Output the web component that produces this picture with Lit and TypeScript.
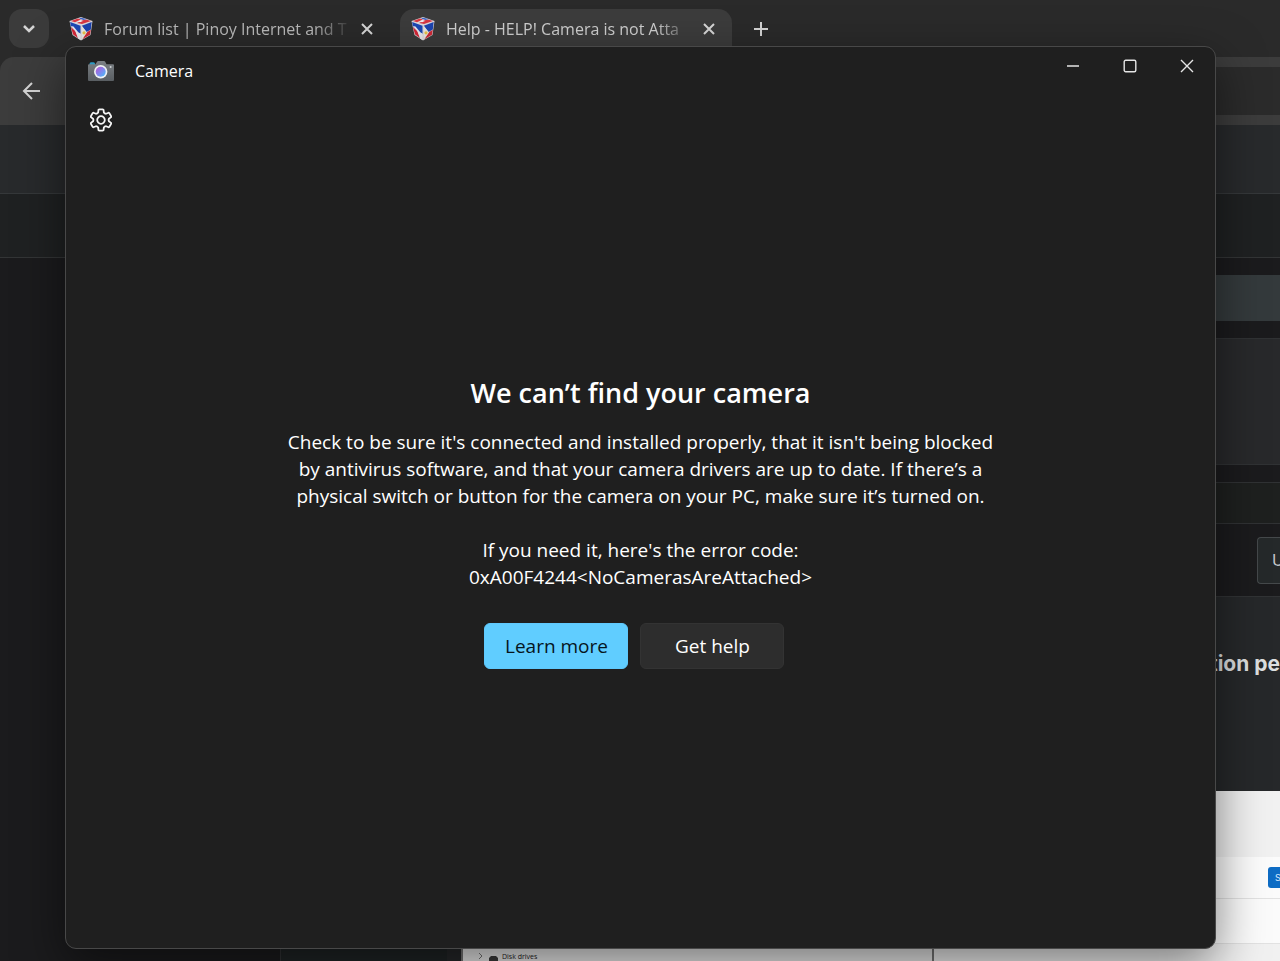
import { LitElement, html, css, svg } from "lit";
import { customElement, property } from "lit/decorators.js";

/** Outline of a six-toothed gear centred on the origin. */
function gearPath(): string {
  const polar = (radius: number, degrees: number) => {
    const a = (degrees * Math.PI) / 180;
    return `${(radius * Math.sin(a)).toFixed(2)} ${(-radius * Math.cos(a)).toFixed(2)}`;
  };
  let d = "";
  for (let tooth = 0; tooth < 6; tooth++) {
    const a = tooth * 60;
    d += `${tooth ? "L" : "M"}${polar(8, a - 21)}`;
    d += `L${polar(10.5, a - 14)}Q${polar(10.9, a - 11)} ${polar(10.8, a - 8)}`;
    d += `L${polar(10.8, a + 8)}Q${polar(10.9, a + 11)} ${polar(10.5, a + 14)}`;
    d += `L${polar(8, a + 21)}Q${polar(7.2, a + 30)} ${polar(8, a + 39)}`;
  }
  return d + "Z";
}

const cubeIcon = html`
  <svg class="cube" viewBox="0 0 24 24" aria-hidden="true">
    <path d="M12 0 23.500 4 21.500 18 12 23.500 3.500 18 0.500 4Z" fill="#ddd9dd" />
    <path d="M2 4 9 1.400 12 2.600 6 5.300Z" fill="#df3542" />
    <path d="M13 3.600 17 2.400 22 4 13 7 8 6Z" fill="#d93540" />
    <path d="M12 0.700 17.500 2 14.500 3 10 1.500Z" fill="#3b62c2" />
    <path d="M8.500 4.300 11.500 3.300 14 4 11 5.300Z" fill="#f5f0f2" />
    <path d="M1.200 5 11.500 8.700 11.500 17 6.500 14 1.800 9.500Z" fill="#1c48b6" />
    <path d="M1.800 10 6 13.500 9.500 21.500 4.200 17.600Z" fill="#d42738" />
    <path d="M1.700 9 4.500 9.500 9.500 15.500 11.500 16.500 11.500 23 9 21.500 6.500 14.500Z" fill="#eae8ec" />
    <path d="M12.800 8.700 22.700 5 21.800 12.500 17.500 15Z" fill="#1c44b0" />
    <path d="M17.500 15.500 21.800 12.800 21 17.700 13.500 22.300Z" fill="#cf2936" />
    <path d="M12.800 9 18 15.500 12.800 22.500Z" fill="#ece8e2" />
    <circle cx="15" cy="15.800" r="1.600" fill="#e8c24a" />
  </svg>
`;

const cameraIcon = html`
  <svg class="camera" viewBox="0 0 26 20" aria-hidden="true">
    <defs>
      <linearGradient id="body" x1="0" y1="0" x2="0" y2="1">
        <stop offset="0" stop-color="#7b8084" />
        <stop offset="1" stop-color="#595e62" />
      </linearGradient>
      <linearGradient id="lens" x1="0" y1="0" x2="1" y2="1">
        <stop offset="0.100" stop-color="#b05fd6" />
        <stop offset="0.550" stop-color="#7d8af0" />
        <stop offset="1" stop-color="#41c4f5" />
      </linearGradient>
    </defs>
    <rect x="1.500" y="1.300" width="5.500" height="4" rx="1.500" fill="#2c9bc4" />
    <path d="M1 3.200H7.500L9 .8Q9.400 0 10.200 0H16Q16.800 0 17.200.8L18.500 3.200H25Q26 3.200 26 4.200V19Q26 20 25 20H1Q0 20 0 19V4.200Q0 3.200 1 3.200Z" fill="url(#body)" />
    <circle cx="12.700" cy="10.800" r="6.700" fill="#eef1f4" />
    <circle cx="12.700" cy="10.800" r="5" fill="url(#lens)" />
    <circle cx="22.600" cy="6" r="1" fill="#cdd1d4" />
  </svg>
`;

const cross = svg`<path d="M1 1 11 11M11 1 1 11" />`;

@customElement("browser-tab")
export class BrowserTab extends LitElement {
  @property() label = "";
  @property({ type: Boolean, reflect: true }) active = false;

  static styles = css`
    :host {
      display: flex;
      align-items: center;
      gap: 11px;
      box-sizing: border-box;
      width: 332px;
      height: 40px;
      padding: 0 15px 0 11px;
      border-radius: 14px 14px 0 0;
      color: #b9b9b9;
    }
    :host([active]) {
      background: #3c3c3c;
      color: #cfcfcf;
    }
    .cube {
      flex: none;
      width: 24px;
      height: 24px;
    }
    .label {
      flex: 1;
      overflow: hidden;
      white-space: nowrap;
      font-size: 16px;
      line-height: 24px;
      mask-image: linear-gradient(to right, #000 86%, transparent 102%);
    }
    .close {
      display: flex;
      flex: none;
      padding: 2px;
      border: 0;
      background: none;
      color: inherit;
    }
    .close svg {
      width: 12px;
      height: 12px;
      fill: none;
      stroke: #d6d6d6;
      stroke-width: 2;
    }
  `;

  render() {
    return html`
      ${cubeIcon}
      <span class="label">${this.label}</span>
      <button class="close" aria-label="Close tab">
        <svg viewBox="0 0 12 12">${cross}</svg>
      </button>
    `;
  }
}

@customElement("browser-window")
export class BrowserWindow extends LitElement {
  static styles = css`
    :host {
      display: flex;
      flex-direction: column;
      height: 100%;
      background: #1b1b1d;
    }
    button {
      font: inherit;
      border: 0;
      margin: 0;
    }
    .tabs {
      display: flex;
      flex: none;
      align-items: center;
      height: 57px;
      padding-left: 9px;
      background: #2a2a2a;
    }
    .search {
      display: grid;
      place-items: center;
      width: 40px;
      height: 39px;
      border-radius: 13px;
      background: #3b3b3b;
      margin-right: 9px;
    }
    .tabs svg,
    .toolbar svg {
      fill: none;
      stroke: #d4d4d4;
      stroke-width: 2;
    }
    .tabs browser-tab + browser-tab {
      margin-left: 10px;
    }
    .new {
      display: flex;
      padding: 0;
      margin-left: 21px;
      background: none;
    }
    .toolbar {
      display: flex;
      align-items: center;
      gap: 60px;
      height: 68px;
      box-sizing: border-box;
      padding-left: 22px;
      background: #3c3c3c;
      border-top-left-radius: 14px;
    }
    .strip {
      flex: none;
      background: #2a2a2a;
    }
    .back {
      display: flex;
      padding: 0;
      background: none;
    }
    .address {
      flex: 1;
      height: 48px;
      min-width: 0;
      box-sizing: border-box;
      border: 0;
      border-radius: 24px 0 0 24px;
      background: #2b2b2b;
    }
    .header {
      flex: none;
      height: 68px;
      background: #282a2c;
      border-bottom: 1px solid #35383a;
    }
    .nav {
      flex: none;
      height: 63px;
      background: #1f2122;
      border-bottom: 1px solid #333536;
    }
    .content {
      display: flex;
      flex: 1;
      flex-direction: column;
      min-height: 0;
      margin-left: 280px;
      padding-top: 17px;
      font-family: Inter, sans-serif;
    }
    .notice {
      flex: none;
      height: 46px;
      margin-bottom: 17px;
      background: #343a3c;
    }
    .banner,
    .crumbs {
      flex: none;
      box-sizing: border-box;
      border: 1px solid #303234;
      border-right: 0;
    }
    .banner {
      height: 127px;
      margin-bottom: 17px;
      background: #28292b;
    }
    .crumbs {
      height: 42px;
      background: #1e201f;
    }
    .actions {
      display: flex;
      flex: none;
      align-items: center;
      justify-content: flex-end;
      height: 72px;
    }
    .action {
      box-sizing: border-box;
      width: 23px;
      height: 47px;
      padding: 0 0 0 14px;
      overflow: hidden;
      text-align: left;
      font-size: 16px;
      color: #c4c8ca;
      background: #25292a;
      border: 1px solid #45494b;
      border-right: 0;
      border-radius: 4px 0 0 4px;
    }
    .post {
      display: grid;
      flex: 1;
      grid-template-columns: 166px 1fr;
      min-height: 0;
      background: #26282a;
      border: 1px solid #313335;
      border-width: 1px 0 0 1px;
    }
    .author {
      background: #1f2425;
    }
    .message {
      display: grid;
      grid-template-rows: 194px 1fr;
      padding-left: 14px;
      min-height: 0;
    }
    .title {
      margin: 0;
      padding-top: 52px;
      text-align: right;
      font-size: 21px;
      line-height: 30px;
      font-weight: 700;
      color: #dcdedf;
      white-space: nowrap;
      overflow: hidden;
    }
    .shot {
      display: grid;
      grid-template-columns: 473px 1fr;
      background: #f1f1f1;
      min-height: 0;
    }
    .devices {
      display: flex;
      align-items: flex-end;
      gap: 4px;
      box-sizing: border-box;
      padding: 0 20px 0 15px;
      border: 2px solid #777;
      border-width: 0 2px;
      background: #ececec;
      color: #222;
      font-family: "Open Sans", sans-serif;
      font-size: 7px;
      line-height: 9px;
      white-space: nowrap;
    }
    .devices svg {
      width: 20px;
      height: 8px;
    }
    .settings {
      display: grid;
      grid-template-rows: 66px 42px 45px 1fr;
    }
    .row {
      display: flex;
      align-items: center;
      justify-content: flex-end;
      background: #fbfbfb;
      border-bottom: 1px solid #e2e2e2;
    }
    .save {
      box-sizing: border-box;
      width: 12px;
      height: 21px;
      padding: 0 0 0 7px;
      overflow: hidden;
      border-radius: 3px 0 0 3px;
      background: #0e6cc4;
      color: #d8ebff;
      font-size: 9px;
      text-align: left;
    }
  `;

  render() {
    return html`
      <div class="tabs">
        <button class="search" aria-label="Search tabs">
          <svg width="14" height="10" viewBox="0 0 14 10"><path d="M2 2 7 7 12 2" stroke-width="2.500" /></svg>
        </button>
        <browser-tab label="Forum list | Pinoy Internet and T"></browser-tab>
        <browser-tab label="Help - HELP! Camera is not Atta" active></browser-tab>
        <button class="new" aria-label="New tab">
          <svg width="16" height="16" viewBox="0 0 16 16"><path d="M8 1V15M1 8H15" /></svg>
        </button>
      </div>
      <div class="strip">
        <div class="toolbar">
          <button class="back" aria-label="Back">
            <svg width="20" height="18" viewBox="0 0 20 18"><path d="M18 9H2M10 1 2 9 10 17" /></svg>
          </button>
          <input class="address" type="text" aria-label="Address" />
        </div>
      </div>
      <div class="header"></div>
      <div class="nav"></div>
      <div class="content">
        <div class="notice"></div>
        <div class="banner"></div>
        <div class="crumbs"></div>
        <div class="actions"><button class="action">U</button></div>
        <div class="post">
          <div class="author"></div>
          <div class="message">
            <h2 class="title">tion pe</h2>
            <div class="shot">
              <div class="devices">
                <svg viewBox="0 0 20 8" aria-hidden="true">
                  <path d="M1 0 4 3 1 6" fill="none" stroke="#777" />
                  <path d="M13 3H18L20 5V8H11V5Z" fill="#3c3c3c" />
                </svg>
                <span>Disk drives</span>
              </div>
              <div class="settings">
                <div></div>
                <div class="row"><button class="save">S</button></div>
                <div class="row"></div>
                <div></div>
              </div>
            </div>
          </div>
        </div>
      </div>
    `;
  }
}

@customElement("camera-window")
export class CameraWindow extends LitElement {
  static styles = css`
    :host {
      display: grid;
      grid-template-rows: 47px 1fr;
      box-sizing: border-box;
      border: 1px solid #484848;
      border-radius: 11px;
      background: #1f1f1f;
      color: #fff;
      overflow: hidden;
      box-shadow: 0 16px 48px rgba(0, 0, 0, 0.5);
    }
    button {
      font: inherit;
      margin: 0;
    }
    .titlebar {
      display: flex;
      align-items: center;
      padding-left: 22px;
    }
    .camera {
      width: 26px;
      height: 20px;
    }
    .name {
      flex: 1;
      margin-left: 21px;
      font-size: 16px;
      line-height: 24px;
    }
    .control {
      display: grid;
      place-items: center;
      align-self: flex-start;
      width: 57px;
      height: 38px;
      padding: 0;
      border: 0;
      background: none;
    }
    .control svg {
      width: 14px;
      height: 14px;
      fill: none;
      stroke: #e6e6e6;
      stroke-width: 1.4;
    }
    .body {
      display: grid;
    }
    .settings,
    .message {
      grid-area: 1 / 1;
    }
    .settings {
      display: flex;
      place-self: start;
      margin: 13px 0 0 23px;
      padding: 0;
      border: 0;
      background: none;
    }
    .settings svg {
      width: 24px;
      height: 26px;
      fill: none;
      stroke: #f4f4f4;
      stroke-width: 1.8;
      stroke-linejoin: round;
    }
    .message {
      place-self: center;
      padding-top: 2px;
      text-align: center;
    }
    .heading {
      margin: 0 0 18px;
      font-size: 27px;
      line-height: 36px;
      font-weight: 600;
    }
    .text {
      margin: 0 0 27px;
      font-size: 19px;
      line-height: 27px;
      white-space: nowrap;
    }
    .text:last-of-type {
      margin-bottom: 32px;
    }
    .buttons {
      display: flex;
      justify-content: center;
      gap: 12px;
      padding-right: 12px;
    }
    .button {
      width: 144px;
      height: 46px;
      padding: 0;
      font-size: 19px;
      border: 1px solid #333;
      border-radius: 6px;
      background: #2d2d2d;
      color: #fff;
    }
    .primary {
      border-color: #5fc9fd;
      background: #60cdff;
      color: #06151d;
    }
  `;

  render() {
    return html`
      <header class="titlebar">
        ${cameraIcon}
        <span class="name">Camera</span>
        <button class="control" aria-label="Minimize">
          <svg viewBox="0 0 14 14"><path d="M1 7H13" /></svg>
        </button>
        <button class="control" aria-label="Maximize">
          <svg viewBox="0 0 14 14"><rect x="1.200" y="1.200" width="11.600" height="11.600" rx="1.500" /></svg>
        </button>
        <button class="control" aria-label="Close">
          <svg viewBox="0 0 14 14"><path d="M1 1 13 13M13 1 1 13" /></svg>
        </button>
      </header>
      <div class="body">
        <button class="settings" aria-label="Settings">
          <svg viewBox="-12 -13 24 26"><path d=${gearPath()} /><circle r="3.800" /></svg>
        </button>
        <div class="message">
          <h1 class="heading">We can’t find your camera</h1>
          <p class="text">
            Check to be sure it's connected and installed properly, that it isn't being blocked<br />
            by antivirus software, and that your camera drivers are up to date. If there’s a<br />
            physical switch or button for the camera on your PC, make sure it’s turned on.
          </p>
          <p class="text">
            If you need it, here's the error code:<br />
            0xA00F4244&lt;NoCamerasAreAttached&gt;
          </p>
          <div class="buttons">
            <button class="button primary">Learn more</button>
            <button class="button">Get help</button>
          </div>
        </div>
      </div>
    `;
  }
}

@customElement("app-root")
export class AppRoot extends LitElement {
  static styles = css`
    :host {
      display: block;
      position: relative;
      height: 100vh;
      overflow: hidden;
      font-family: "Open Sans", "Noto Sans", sans-serif;
    }
    .front {
      position: absolute;
      inset: 46px 64px 12px 65px;
    }
  `;

  render() {
    return html`
      <browser-window></browser-window>
      <camera-window class="front"></camera-window>
    `;
  }
}
